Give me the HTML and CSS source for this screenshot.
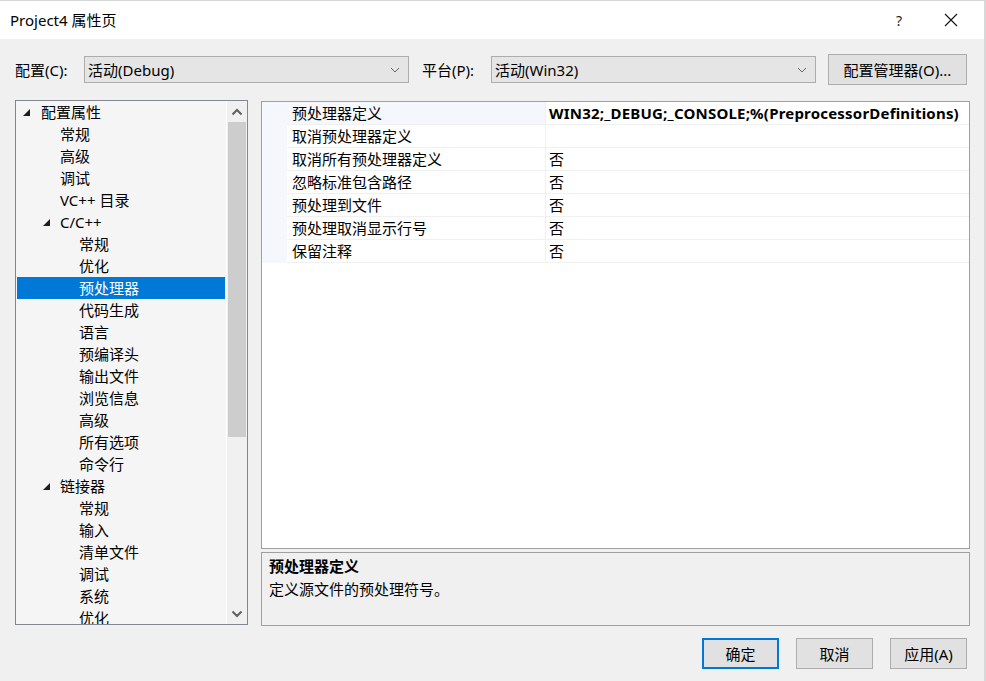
FILE: index.html
```html
<!DOCTYPE html>
<html lang="zh-CN">
<head>
    <meta charset="UTF-8">
    <title>Project4 属性页</title>
    <link rel="stylesheet" href="styles.css">
</head>
<body>
<div class="dialog">
    <div class="titlebar">
        <span class="title">Project4 属性页</span>
        <span class="help">?</span>
        <svg class="close" width="14" height="14" viewBox="0 0 14 14"><path d="M1 1 L13 13 M13 1 L1 13" stroke="#111" stroke-width="1.1" fill="none"/></svg>
    </div>

    <div class="toolbar">
        <span class="label">配置(C):</span>
        <div class="combo combo-config">
            <span>活动(Debug)</span>
            <svg width="10" height="6" viewBox="0 0 10 6"><path d="M1 1 L5 5 L9 1" stroke="#666" fill="none"/></svg>
        </div>
        <span class="label label-platform">平台(P):</span>
        <div class="combo combo-platform">
            <span>活动(Win32)</span>
            <svg width="10" height="6" viewBox="0 0 10 6"><path d="M1 1 L5 5 L9 1" stroke="#666" fill="none"/></svg>
        </div>
        <button class="btn btn-manager">配置管理器(O)...</button>
    </div>

    <div class="main">
        <div class="tree">
            <ul class="tree-items">
                <li class="lvl0"><i class="tri"></i>配置属性</li>
                <li class="lvl1">常规</li>
                <li class="lvl1">高级</li>
                <li class="lvl1">调试</li>
                <li class="lvl1">VC++ 目录</li>
                <li class="lvl1"><i class="tri"></i>C/C++</li>
                <li class="lvl2">常规</li>
                <li class="lvl2">优化</li>
                <li class="lvl2 selected">预处理器</li>
                <li class="lvl2">代码生成</li>
                <li class="lvl2">语言</li>
                <li class="lvl2">预编译头</li>
                <li class="lvl2">输出文件</li>
                <li class="lvl2">浏览信息</li>
                <li class="lvl2">高级</li>
                <li class="lvl2">所有选项</li>
                <li class="lvl2">命令行</li>
                <li class="lvl1"><i class="tri"></i>链接器</li>
                <li class="lvl2">常规</li>
                <li class="lvl2">输入</li>
                <li class="lvl2">清单文件</li>
                <li class="lvl2">调试</li>
                <li class="lvl2">系统</li>
                <li class="lvl2">优化</li>
            </ul>
            <div class="scrollbar">
                <div class="sb-btn">
                    <svg width="12" height="8" viewBox="0 0 12 8"><path d="M1.5 6.5 L6 2 L10.5 6.5" stroke="#606060" stroke-width="2" fill="none"/></svg>
                </div>
                <div class="sb-track">
                    <div class="sb-thumb"></div>
                </div>
                <div class="sb-btn">
                    <svg width="12" height="8" viewBox="0 0 12 8"><path d="M1.5 1.5 L6 6 L10.5 1.5" stroke="#606060" stroke-width="2" fill="none"/></svg>
                </div>
            </div>
        </div>

        <div class="right">
            <div class="grid">
                <div class="row active">
                    <div class="gutter"></div>
                    <div class="name">预处理器定义</div>
                    <div class="value bold">WIN32;_DEBUG;_CONSOLE;%(PreprocessorDefinitions)</div>
                </div>
                <div class="row">
                    <div class="gutter"></div>
                    <div class="name">取消预处理器定义</div>
                    <div class="value"></div>
                </div>
                <div class="row">
                    <div class="gutter"></div>
                    <div class="name">取消所有预处理器定义</div>
                    <div class="value">否</div>
                </div>
                <div class="row">
                    <div class="gutter"></div>
                    <div class="name">忽略标准包含路径</div>
                    <div class="value">否</div>
                </div>
                <div class="row">
                    <div class="gutter"></div>
                    <div class="name">预处理到文件</div>
                    <div class="value">否</div>
                </div>
                <div class="row">
                    <div class="gutter"></div>
                    <div class="name">预处理取消显示行号</div>
                    <div class="value">否</div>
                </div>
                <div class="row">
                    <div class="gutter"></div>
                    <div class="name">保留注释</div>
                    <div class="value">否</div>
                </div>
            </div>
            <div class="desc">
                <div class="desc-title">预处理器定义</div>
                <div class="desc-text">定义源文件的预处理符号。</div>
            </div>
        </div>
    </div>

    <div class="footer">
        <button class="btn btn-ok">确定</button>
        <button class="btn">取消</button>
        <button class="btn">应用(A)</button>
    </div>
</div>
</body>
</html>
```

FILE: styles.css
```css
* {
    box-sizing: border-box;
}
body {
    margin: 0;
    font-family: "Noto Sans", "Noto Sans CJK SC", sans-serif;
    font-size: 15px;
    color: #000;
}
.dialog {
    width: 986px;
    height: 681px;
    background: #f0f0f0;
    border-top: 1px solid #d6d6d6;
    border-right: 2px solid #d8d8d8;
    overflow: hidden;
}
.titlebar {
    display: flex;
    align-items: center;
    height: 38px;
    background: #fff;
    padding: 0 26px 0 10px;
}
.title {
    font-size: 15px;
    flex: 1;
    padding-bottom: 2px;
}
.help {
    font-size: 14px;
    margin-right: 42px;
    color: #222;
}
.close {
    display: block;
}

.toolbar {
    display: flex;
    align-items: center;
    height: 61px;
    padding: 0 17px 0 15px;
}
.label {
    font-size: 15px;
    width: 69px;
}
.label-platform {
    margin-left: 13px;
}
.combo {
    display: flex;
    align-items: center;
    justify-content: space-between;
    width: 325px;
    height: 27px;
    background: #e5e5e5;
    border: 1px solid #adadad;
    padding: 0 8px 0 3px;
    font-size: 15px;
}
.combo svg {
    display: block;
}
.btn {
    font-family: "Noto Sans", "Noto Sans CJK SC", sans-serif;
    font-size: 15px;
    height: 31px;
    width: 77px;
    background: #e1e1e1;
    border: 1px solid #adadad;
    padding: 0;
    color: #000;
}
.btn-manager {
    width: 139px;
    margin-left: auto;
}

.main {
    display: flex;
    align-items: flex-start;
    padding-left: 15px;
}
.tree {
    display: flex;
    width: 233px;
    height: 525px;
    border: 1px solid #828790;
    background: #f5f5f5;
}
.tree-items {
    list-style: none;
    margin: 0;
    padding: 0 1px;
    flex: 1;
    overflow: hidden;
    border-right: 1px solid #fff;
}
.tree-items li {
    position: relative;
    height: 22px;
    line-height: 22px;
    white-space: nowrap;
}
.tree-items .lvl0 {
    padding-left: 24px;
}
.tree-items .lvl1 {
    padding-left: 43px;
}
.tree-items .lvl2 {
    padding-left: 62px;
}
.tree-items .selected {
    background: #0078d7;
    color: #fff;
}
.tri {
    position: absolute;
    top: 8px;
    width: 0;
    height: 0;
    border-left: 7px solid transparent;
    border-bottom: 7px solid #1e1e1e;
}
.lvl0 .tri {
    left: 6px;
}
.lvl1 .tri {
    left: 26px;
}
.scrollbar {
    width: 20px;
    display: flex;
    flex-direction: column;
    background: #f0f0f0;
}
.sb-btn {
    height: 21px;
    display: flex;
    align-items: center;
    justify-content: center;
}
.sb-track {
    flex: 1;
}
.sb-thumb {
    height: 315px;
    background: #cdcdcd;
    margin: 0 1px;
}

.right {
    display: flex;
    flex-direction: column;
    gap: 3px;
    margin-left: 13px;
    margin-top: 1px;
}
.grid {
    width: 709px;
    height: 448px;
    background: #fff;
    border: 1px solid #a0a0a0;
}
.row {
    display: flex;
    height: 23px;
    line-height: 22px;
}
.gutter {
    width: 25px;
    background: #f5f7fc;
}
.name {
    width: 259px;
    padding-left: 5px;
    border-bottom: 1px solid #f0f0f0;
    border-right: 1px solid #f0f0f0;
    white-space: nowrap;
}
.value {
    flex: 1;
    padding-left: 3px;
    border-bottom: 1px solid #f0f0f0;
    white-space: nowrap;
}
.row.active .name {
    background: #f5f7fc;
}
.bold {
    font-weight: bold;
    letter-spacing: 0.2px;
}
.desc {
    width: 709px;
    height: 74px;
    border: 1px solid #a0a0a0;
    background: #f0f0f0;
    padding: 2px 7px;
}
.desc-title {
    font-weight: bold;
    line-height: 22px;
}
.desc-text {
    line-height: 24px;
}

.footer {
    display: flex;
    justify-content: flex-end;
    gap: 17px;
    padding: 12px 17px 0 0;
}
.btn-ok {
    border: 2px solid #0078d7;
}
```
